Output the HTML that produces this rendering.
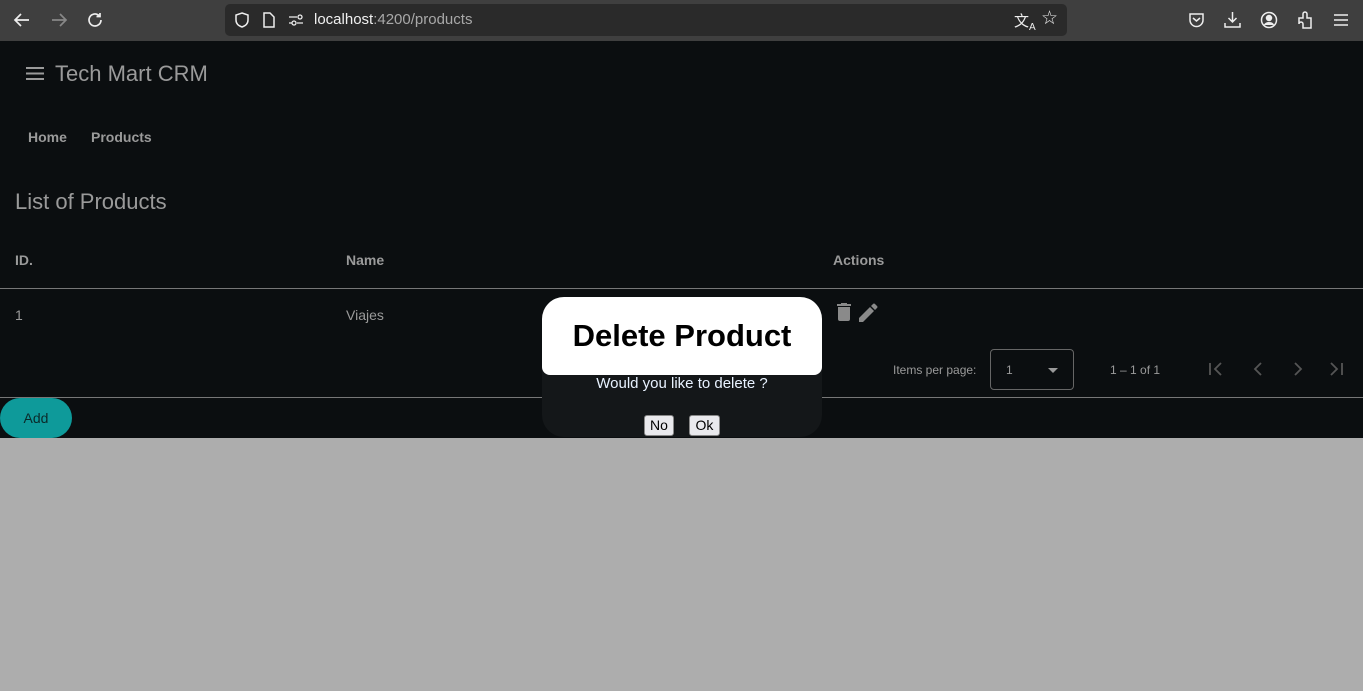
<!DOCTYPE html>
<html><head><style>
*{margin:0;padding:0;box-sizing:border-box}
body{width:1363px;height:691px;background:#adadad;font-family:"Liberation Sans",sans-serif;position:relative;overflow:hidden}
.chrome{position:absolute;left:0;top:0;width:1363px;height:41px;background:#3f3f3f}
.url{position:absolute;left:225px;top:4px;width:842px;height:32px;background:#2a2a2a;border-radius:5px}
.app{position:absolute;left:0;top:41px;width:1363px;height:397px;background:#0b0e10;color:#9a9a9a}
.a{position:absolute;white-space:nowrap}
svg{position:absolute}
</style></head><body>
<div class="chrome">
<svg style="left:12px;top:10px" width="20" height="20" viewBox="0 0 20 20" fill="none" stroke="#eee" stroke-width="1.7"><path d="M17 10H4M9 4L3 10l6 6"/></svg>
<svg style="left:49px;top:10px" width="20" height="20" viewBox="0 0 20 20" fill="none" stroke="#888" stroke-width="1.7"><path d="M3 10h13M11 4l6 6-6 6"/></svg>
<svg style="left:85px;top:10px" width="20" height="20" viewBox="0 0 20 20" fill="none" stroke="#eee" stroke-width="1.7"><path d="M16 10a6 6 0 1 1-2-4.5M15 3v3.5h-3.5"/></svg>
<div class="url">
<svg style="left:8px;top:7px" width="18" height="18" viewBox="0 0 18 18" fill="none" stroke="#eee" stroke-width="1.5"><path d="M9 2l6 2v5c0 4-3 6-6 7-3-1-6-3-6-7V4z"/></svg>
<svg style="left:36px;top:7px" width="16" height="18" viewBox="0 0 16 18" fill="none" stroke="#eee" stroke-width="1.5"><path d="M3 2h6l4 4v10H3z"/></svg>
<svg style="left:63px;top:9px" width="16" height="14" viewBox="0 0 16 14" fill="none" stroke="#eee" stroke-width="1.3"><path d="M1 4h8M1 10h3M9 10h6"/><circle cx="12" cy="4" r="2"/><circle cx="6" cy="10" r="2"/></svg>
<div class="a" style="left:89px;top:7px;font-size:15px;color:#f0f0f0">localhost<span style="color:#a8a8a8">:4200/products</span></div>
<div class="a" style="left:789px;top:6px;font-size:15px;color:#eee">文<sub style="font-size:10px">A</sub></div>
<div class="a" style="left:816px;top:3px;font-size:19px;color:#eee">☆</div>
</div>
<svg style="left:1188px;top:12px" width="17" height="16" viewBox="0 0 17 16" fill="none" stroke="#eee" stroke-width="1.5"><path d="M2 2h13v6a6.5 6.5 0 0 1-13 0z M5 6l3.5 3L12 6"/></svg>
<svg style="left:1224px;top:11px" width="17" height="18" viewBox="0 0 17 18" fill="none" stroke="#eee" stroke-width="1.5"><path d="M8.5 1v10M4.5 7l4 4 4-4M1 12v4h15v-4"/></svg>
<svg style="left:1260px;top:11px" width="18" height="18" viewBox="0 0 18 18" fill="none" stroke="#eee" stroke-width="1.5"><circle cx="9" cy="9" r="7.5"/><circle cx="9" cy="7" r="2.5" fill="#eee"/><path d="M4.5 14c2-3 7-3 9 0" fill="#eee"/></svg>
<svg style="left:1297px;top:11px" width="17" height="18" viewBox="0 0 17 18" fill="none" stroke="#eee" stroke-width="1.5"><path d="M2 7h4V3a2 2 0 0 1 4 0v4h4v10H6v-4a2 2 0 0 0-4 0z"/></svg>
<svg style="left:1333px;top:12px" width="16" height="16" viewBox="0 0 16 16" stroke="#eee" stroke-width="1.5"><path d="M1 3h14M1 8h14M1 13h14"/></svg>
</div>
<div class="app">
<svg style="left:26px;top:26px" width="18" height="13" viewBox="0 0 18 13" stroke="#9a9a9a" stroke-width="2"><path d="M0 1h18M0 6.5h18M0 12h18"/></svg>
<div class="a" style="left:55px;top:20px;font-size:22px">Tech Mart CRM</div>
<div class="a" style="left:28px;top:88px;font-size:14px;font-weight:bold">Home</div>
<div class="a" style="left:91px;top:88px;font-size:14px;font-weight:bold">Products</div>
<div class="a" style="left:15px;top:148px;font-size:22px">List of Products</div>
<div class="a" style="left:15px;top:211px;font-size:14px;font-weight:bold">ID.</div>
<div class="a" style="left:346px;top:211px;font-size:14px;font-weight:bold">Name</div>
<div class="a" style="left:833px;top:211px;font-size:14px;font-weight:bold">Actions</div>
<div class="a" style="left:0;top:247px;width:1363px;height:1px;background:#777"></div>
<div class="a" style="left:15px;top:266px;font-size:14px">1</div>
<div class="a" style="left:346px;top:266px;font-size:14px">Viajes</div>
<svg style="left:837px;top:262px" width="14" height="18" viewBox="0 0 14 18" fill="#8a8a8a"><path d="M4 0h6v1h4v2H0V1h4zM1 4h12v12a2 2 0 0 1-2 2H3a2 2 0 0 1-2-2z"/></svg>
<svg style="left:859px;top:262px" width="19" height="19" viewBox="0 0 19 19" fill="#8a8a8a"><path d="M0 15v4h4L15 8l-4-4zM12 3l2-2a1.4 1.4 0 0 1 2 0l2 2a1.4 1.4 0 0 1 0 2l-2 2z"/></svg>
<div class="a" style="left:893px;top:322px;font-size:12px">Items per page:</div>
<div class="a" style="left:990px;top:308px;width:84px;height:41px;border:1px solid #666;border-radius:4px"></div>
<div class="a" style="left:1006px;top:322px;font-size:12px">1</div>
<div class="a" style="left:1048px;top:327px;width:0;height:0;border-left:5px solid transparent;border-right:5px solid transparent;border-top:5px solid #9a9a9a"></div>
<div class="a" style="left:1110px;top:322px;font-size:12px">1 – 1 of 1</div>
<svg style="left:1208px;top:320px" width="140" height="16" viewBox="0 0 140 16" fill="none" stroke="#555" stroke-width="1.8"><path d="M2 2v12M13 2L7 8l6 6M53 2l-6 6 6 6M87 2l6 6-6 6M123 2l6 6-6 6M134 2v12"/></svg>
<div class="a" style="left:0;top:356px;width:1363px;height:1px;background:#777"></div>
<div class="a" style="left:0;top:357px;width:72px;height:40px;background:#0e9a9a;border-radius:20px;color:#0b2a2a;font-size:14px;text-align:center;line-height:40px">Add</div>
</div>
<div class="a" style="left:542px;top:297px;width:280px;height:140px;background:#141719;border-radius:22px"></div>
<div class="a" style="left:542px;top:297px;width:280px;height:78px;background:#fff;border-radius:22px 22px 8px 8px;color:#000;font-weight:bold;font-size:31px;text-align:center;line-height:78px">Delete Product</div>
<div class="a" style="left:542px;top:375px;width:280px;text-align:center;font-size:15px;color:#e8f2ff">Would you like to delete ?</div>
<div class="a" style="left:644px;top:415px;width:30px;height:21px;background:#e9e9ed;border:1px solid #888;border-radius:3px;font-size:14px;text-align:center;line-height:19px;color:#000">No</div>
<div class="a" style="left:689px;top:415px;width:31px;height:21px;background:#e9e9ed;border:1px solid #888;border-radius:3px;font-size:14px;text-align:center;line-height:19px;color:#000">Ok</div>
</body></html>
